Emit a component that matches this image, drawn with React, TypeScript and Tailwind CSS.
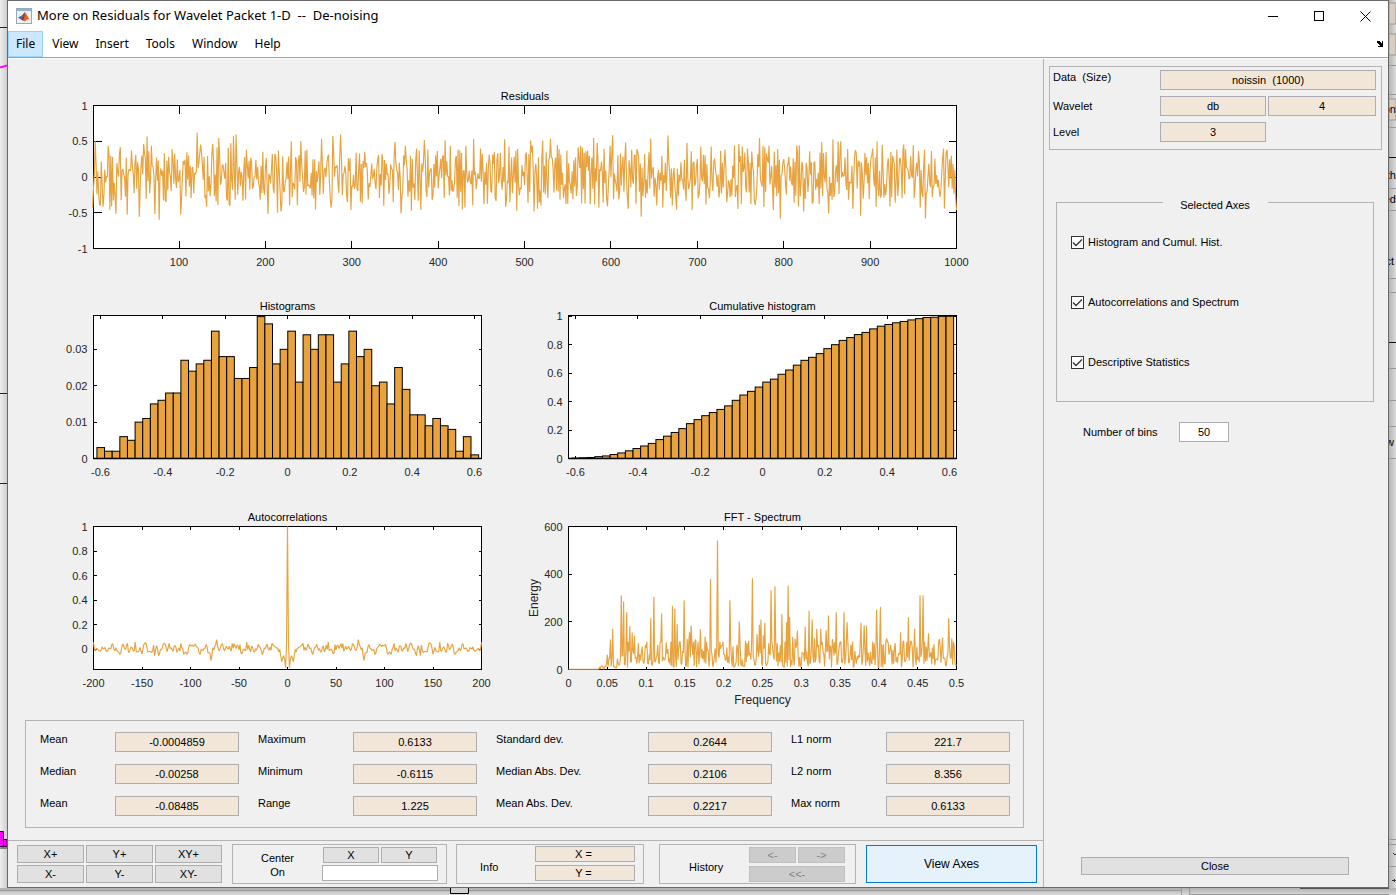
import type { ReactNode } from "react";

/* ---------- data ---------- */

function rng(seed: number) {
  let s = seed;
  return () => {
    s = (s * 1664525 + 1013904223) % 4294967296;
    return s / 4294967296;
  };
}

type Pair = [number, number];

// [sample offset in plot thirds, residual height in plot thirds below the top]
const RESIDUAL_KNOTS: Pair[] = [
  [9, 170], [47, 184], [84, 188], [116, 198], [152, 178], [162, 156], [176, 184], [238, 194], [312, 144], [324, 180],
  [359, 178], [378, 160], [414, 176], [422, 154], [429, 150], [461, 196], [511, 202], [557, 198], [596, 171], [624, 169],
  [641, 196], [687, 163], [720, 154], [744, 150], [815, 202], [905, 172], [938, 184], [972, 192], [995, 166], [1057, 167],
  [1071, 184], [1109, 170], [1119, 184], [1143, 163], [1162, 192], [1234, 164], [1247, 186],
  [1, 370], [20, 362], [32, 368], [53, 377], [71, 389], [103, 392], [139, 398], [186, 390], [199, 407], [219, 353],
  [263, 392], [341, 368], [411, 365], [526, 390], [555, 386], [564, 382], [590, 364], [668, 376], [715, 371], [775, 378],
  [807, 358], [923, 388], [955, 380], [985, 378], [1107, 376], [1115, 370], [1140, 364], [1174, 360], [1238, 368], [1271, 380],
  [1300, 204], [1313, 168], [1319, 184], [1349, 168], [1372, 162], [1393, 181], [1421, 198], [1456, 188], [1463, 184],
  [1484, 198], [1502, 160], [1511, 175], [1551, 184], [1559, 152], [1598, 174], [1616, 196], [1633, 202], [1672, 162],
  [1725, 153], [1782, 175], [1823, 186], [1855, 186], [1896, 196], [1924, 182], [1936, 178], [1948, 186], [1963, 192],
  [1998, 160], [2008, 184], [2026, 184], [2109, 184], [2117, 182], [2150, 200], [2184, 172], [2220, 164], [2234, 170],
  [2242, 170], [2286, 197], [2337, 192], [2351, 171], [2366, 181], [2392, 202], [2411, 196], [2431, 180], [2437, 194],
  [2460, 182], [2475, 200], [2493, 196], [2550, 192], [2561, 196],
  [1272, 380], [1305, 356], [1324, 382], [1334, 374], [1344, 364], [1439, 345], [1476, 358], [1490, 360], [1518, 371],
  [1544, 367], [1604, 374], [1644, 398], [1691, 364], [1710, 370], [1738, 364], [1749, 377], [1778, 350], [1798, 377],
  [1901, 354], [1933, 375], [1985, 362], [2040, 378], [2060, 403], [2102, 356], [2130, 382], [2157, 358], [2205, 388],
  [2278, 374], [2301, 395], [2349, 368], [2389, 367], [2480, 370], [2495, 403], [2553, 373], [2588, 378],
];

const residuals: Pair[] = (() => {
  const r = rng(77);
  const raw = Array.from({ length: 1001 }, () => (r() - 0.5) * 0.76);
  const out = raw.map((v, i) => {
    const a = raw[Math.max(0, i - 1)];
    const b = raw[Math.min(1000, i + 1)];
    return v * 0.95 - (a + b) * 0.12;
  });
  for (const [x, y] of RESIDUAL_KNOTS) {
    out[Math.min(1000, Math.round((x / 2589) * 1000))] = (278 - y) / 216;
  }
  return out.map((v, i) => [i, v] as Pair);
})();

const COUNTS = [
  3, 2, 2, 6, 5, 10, 11, 15, 16, 18, 18, 27, 24, 26, 27, 35, 28, 28, 22, 22, 25, 39, 37, 26, 30, 35, 21, 34, 30, 34, 34,
  21, 26, 35, 28, 30, 20, 21, 15, 25, 19, 12, 12, 9, 11, 9, 8, 2, 6, 1,
];
const frequencies = COUNTS.map((c) => c / 1000);
const cumulative = COUNTS.map((_, i) => COUNTS.slice(0, i + 1).reduce((a, b) => a + b, 0) / 1000);

const autocorr: Pair[] = (() => {
  const r = rng(2024);
  const raw = Array.from({ length: 203 }, () => r() - 0.5);
  const half = Array.from({ length: 201 }, (_, i) => (raw[i] + raw[i + 1] * 0.9) * 0.062 + 0.006);
  const fixed: Record<number, number> = {
    0: 1, 1: 0.05, 2: -0.15, 3: -0.08, 4: -0.05, 5: -0.07, 6: -0.1, 7: -0.05, 8: 0, 9: -0.02, 10: 0.01, 11: 0.01,
    12: 0.02, 13: 0.02, 14: 0.03, 15: 0.04, 16: 0.05, 42: 0.06, 49: 0.04, 57: 0.05, 73: 0.08, 74: 0.04, 78: -0.05,
    79: -0.09, 80: -0.03, 110: 0.05, 133: -0.05, 137: -0.05, 157: 0.06, 165: 0.05,
  };
  const at = (k: number) => fixed[k] ?? half[k];
  return Array.from({ length: 401 }, (_, i) => [i - 200, at(Math.abs(i - 200))] as Pair);
})();

// [offset in plot thirds, height in plot thirds below the top]
const SPECTRUM_KNOTS: Pair[] = [
  [117, 450], [126, 404], [133, 372], [159, 272], [166, 290], [176, 322], [184, 364], [192, 383], [199, 392], [211, 415],
  [232, 420], [247, 340], [256, 276], [268, 420], [280, 326], [294, 412], [313, 303], [320, 312], [327, 358], [348, 286],
  [356, 402], [364, 382], [369, 362], [383, 404], [397, 373], [411, 395], [427, 223], [447, 107], [456, 432], [485, 286],
  [494, 425], [506, 420], [514, 350], [532, 408], [540, 408], [553, 220], [567, 388], [573, 360], [579, 344], [586, 392],
  [591, 354], [601, 415], [609, 256], [621, 244], [628, 415], [642, 328], [655, 352], [660, 243], [665, 336], [673, 396],
  [680, 402], [689, 377], [711, 366], [723, 318], [733, 344], [740, 400], [747, 372], [758, 372], [775, 376], [781, 332],
  [792, 403], [799, 412], [805, 322], [814, 424], [829, 322], [837, 352], [849, 420], [880, 354], [889, 361], [895, 363],
  [918, 415], [926, 314], [938, 306], [946, 418], [955, 401], [999, 382], [1007, 408], [1022, 337], [1028, 408],
  [1039, 372], [1047, 425], [1057, 271], [1065, 271], [1074, 425], [1081, 385], [1099, 418], [1114, 403], [1125, 398],
  [1142, 340], [1151, 400], [1160, 420],
];

const spectrum: Pair[] = (() => {
  const r = rng(99);
  const out = Array.from({ length: 501 }, (_, i) => {
    const v = 8 + Math.min(108, -Math.log(1 - r() * 0.98) * 62);
    if (i < 39) return 1;
    if (i < 49) return v * 0.12;
    if (i < 66) return v * 0.4;
    return v;
  });
  for (const [x, y] of SPECTRUM_KNOTS) {
    out[Math.round((x / 1166) * 500)] = (494 - y) / 0.715;
  }
  return out.map((v, i) => [i / 1000, v] as Pair);
})();

/* ---------- charts ---------- */

interface AxesProps {
  title: string;
  size: Pair;
  left: number;
  top: number;
  width: number;
  xlim: Pair;
  ylim: Pair;
  xticks: number[];
  yticks: number[];
  tick?: number;
  xlabel?: string;
  ylabel?: string;
  children: (sx: (v: number) => number, sy: (v: number) => number) => ReactNode;
}

const PLOT_HEIGHT = 143;

function Axes({ title, size, left, top, width, xlim, ylim, xticks, yticks, tick = 3, xlabel, ylabel, children }: AxesProps) {
  const right = left + width;
  const bottom = top + PLOT_HEIGHT;
  const sx = (v: number) => left + ((v - xlim[0]) / (xlim[1] - xlim[0])) * width;
  const sy = (v: number) => bottom - ((v - ylim[0]) / (ylim[1] - ylim[0])) * PLOT_HEIGHT;
  return (
    <svg
      viewBox={`0 0 ${size[0]} ${size[1]}`}
      className="block h-auto w-full text-[11px]"
      fill="#262626"
      role="img"
      aria-label={title}
    >
      <rect x={left} y={top} width={width} height={PLOT_HEIGHT} fill="#fff" />
      <g stroke="#000" fill="none" shapeRendering="crispEdges">
        <rect x={left} y={top} width={width} height={PLOT_HEIGHT} />
        {xticks.map((v) => (
          <path key={v} d={`M${sx(v)} ${bottom}v${-tick}M${sx(v)} ${top}v${tick}`} />
        ))}
        {yticks.map((v) => (
          <path key={v} d={`M${left} ${sy(v)}h${tick}M${right} ${sy(v)}h${-tick}`} />
        ))}
      </g>
      {children(sx, sy)}
      <text x={left + width / 2} y={top - 6} textAnchor="middle" fill="#000">
        {title}
      </text>
      {xticks.map((v) => (
        <text key={v} x={sx(v)} y={bottom + 17} textAnchor="middle">
          {v}
        </text>
      ))}
      {yticks.map((v) => (
        <text key={v} x={left - 6} y={sy(v) + 4} textAnchor="end">
          {v}
        </text>
      ))}
      {xlabel && (
        <text x={left + width / 2} y={bottom + 34} textAnchor="middle" className="text-[12px]">
          {xlabel}
        </text>
      )}
      {ylabel && (
        <text
          transform={`translate(${left - 31} ${top + PLOT_HEIGHT / 2}) rotate(-90)`}
          textAnchor="middle"
          className="text-[12px]"
        >
          {ylabel}
        </text>
      )}
    </svg>
  );
}

type Scale = (v: number) => number;

function Line({ data, sx, sy }: { data: Pair[]; sx: Scale; sy: Scale }) {
  return (
    <polyline
      points={data.map(([x, y]) => `${sx(x).toFixed(2)},${sy(y).toFixed(2)}`).join(" ")}
      fill="none"
      stroke="#e8a23e"
      strokeWidth="1.15"
      strokeLinejoin="bevel"
    />
  );
}

function Bars({ data, sx, sy }: { data: number[]; sx: Scale; sy: Scale }) {
  const lo = -0.6115;
  const step = (0.6133 - lo) / data.length;
  return (
    <g fill="#e8a23e" stroke="#000">
      {data.map((v, i) => (
        <rect key={i} x={sx(lo + i * step)} width={sx(step) - sx(0)} y={sy(v)} height={sy(0) - sy(v)} />
      ))}
      <path d={`M${sx(-0.6225)} ${sy(0)}H${sx(0.6225)}`} strokeWidth="1.6" />
    </g>
  );
}

const HIST_TICKS = [-0.6, -0.4, -0.2, 0, 0.2, 0.4, 0.6];

/* ---------- controls ---------- */

function Field({ id, value, label, className = "" }: { id: string; value: string; label?: string; className?: string }) {
  return (
    <input
      id={id}
      readOnly
      defaultValue={value}
      aria-label={label}
      className={`w-full min-w-0 border border-[#abadb3] bg-[#f2e6d9] text-center outline-none ${className}`}
    />
  );
}

function PushButton({ children, className = "", disabled }: { children: ReactNode; className?: string; disabled?: boolean }) {
  return (
    <button
      type="button"
      disabled={disabled}
      className={`flex items-center justify-center border ${
        disabled ? "border-[#bfbfbf] bg-[#cccccc] text-[#838383]" : "border-[#adadad] bg-[#e1e1e1]"
      } ${className}`}
    >
      {children}
    </button>
  );
}

function CheckBox({ label }: { label: string }) {
  return (
    <label className="flex h-[13px] items-center gap-1">
      <span className="grid">
        <input
          type="checkbox"
          defaultChecked
          className="peer col-start-1 row-start-1 size-[13px] appearance-none border border-[#333] bg-white"
        />
        <svg
          viewBox="0 0 13 13"
          className="pointer-events-none col-start-1 row-start-1 hidden size-[13px] peer-checked:block"
          fill="none"
          stroke="#333"
          strokeWidth="1.3"
        >
          <path d="M2 6.500l3 3 6-6" />
        </svg>
      </span>
      {label}
    </label>
  );
}

const STATS = [
  ["Mean", "-0.0004859", "Maximum", "0.6133", "Standard dev.", "0.2644", "L1 norm", "221.7"],
  ["Median", "-0.00258", "Minimum", "-0.6115", "Median Abs. Dev.", "0.2106", "L2 norm", "8.356"],
  ["Mean", "-0.08485", "Range", "1.225", "Mean Abs. Dev.", "0.2217", "Max norm", "0.6133"],
];

function Statistics() {
  return (
    <section className="mt-[10px] mr-[19px] mb-3 ml-[17px] grid grid-cols-[75px_1fr_114px_1fr_171px_1fr_114px_1fr] gap-y-3 border border-[#b3b3b3] pt-[11px] pr-[13px] pb-[11px] pl-[14px]">
      {STATS.flatMap((row, r) =>
        [0, 2, 4, 6].flatMap((c) => {
          const id = `stat-${r}-${c}`;
          return [
            <label key={`${id}-label`} htmlFor={id} className={`leading-[14px] ${c ? "pl-[19px]" : ""}`}>
              {row[c]}
            </label>,
            <Field key={id} id={id} value={row[c + 1]} className="h-5" />,
          ];
        }),
      )}
    </section>
  );
}

function BottomBar() {
  return (
    <footer className="flex items-start border-t border-[#b3b3b3] pt-[3px] pr-[6px] pb-[3px] pl-[9px]">
      <div className="mt-px grid grid-cols-3 gap-[2px]">
        {["X+", "Y+", "XY+", "X-", "Y-", "XY-"].map((t) => (
          <PushButton key={t} className="h-[18px] w-[67px]">
            {t}
          </PushButton>
        ))}
      </div>
      <div className="ml-[10px] flex h-10 w-[215px] border border-[#b3b3b3] pt-[2px]">
        <label htmlFor="center-on" className="w-[89px] px-7 pt-1 text-center leading-[14px]">
          Center On
        </label>
        <div className="flex w-[116px] flex-col gap-[2px]">
          <div className="flex gap-[2px] px-px">
            <PushButton className="h-4 flex-1">X</PushButton>
            <PushButton className="h-4 flex-1">Y</PushButton>
          </div>
          <input id="center-on" className="h-4 w-full border border-[#abadb3] bg-white outline-none" />
        </div>
      </div>
      <div className="ml-[9px] flex h-10 w-[188px] border border-[#b3b3b3] pt-px">
        <span className="w-[78px] pt-[14px] pl-[23px] leading-[14px]">Info</span>
        <div className="flex w-[100px] flex-col gap-[3px]">
          <Field id="info-x" label="X value" value="X = " className="h-4" />
          <Field id="info-y" label="Y value" value="Y = " className="h-4" />
        </div>
      </div>
      <div className="ml-[15px] flex h-10 w-[197px] border border-[#b3b3b3] pt-[2px]">
        <span className="w-[89px] pt-[13px] pl-[29px] leading-[14px]">History</span>
        <div className="grid w-[96px] grid-cols-2 gap-[2px]">
          <PushButton disabled className="h-4">
            &lt;-
          </PushButton>
          <PushButton disabled className="h-4">
            -&gt;
          </PushButton>
          <PushButton disabled className="col-span-2 h-4">
            &lt;&lt;-
          </PushButton>
        </div>
      </div>
      <button
        type="button"
        className="mt-px ml-[10px] h-[38px] flex-1 border border-[#0078d7] bg-[#e5f1fb] text-[12px]"
      >
        View Axes
      </button>
    </footer>
  );
}

function SidePanel() {
  return (
    <aside className="flex w-[345px] shrink-0 flex-col border-l border-[#b3b3b3]">
      <section className="mt-[7px] mr-[6px] ml-[5px] grid grid-cols-[107px_106px_1fr] items-center gap-y-[6px] border border-[#b3b3b3] pt-[3px] pr-[5px] pb-[7px] pl-[3px]">
        <label htmlFor="data-name" className="self-start leading-[14px] whitespace-pre">
          {"Data  (Size)"}
        </label>
        <Field id="data-name" value="noissin  (1000)" className="col-span-2 h-5" />
        <label htmlFor="wavelet">Wavelet</label>
        <Field id="wavelet" value="db" className="h-5" />
        <div className="flex pl-[2px]">
          <Field id="wavelet-order" label="Wavelet order" value="4" className="h-5" />
        </div>
        <label htmlFor="level">Level</label>
        <Field id="level" value="3" className="h-5" />
      </section>

      <fieldset className="mt-[42px] mr-[14px] ml-3 border border-[#b3b3b3] px-[14px] pt-6 pb-8">
        <legend className="mx-auto w-[105px] pt-[6px] text-center leading-[14px]">Selected Axes</legend>
        <div className="flex flex-col gap-[47px]">
          <CheckBox label="Histogram and Cumul. Hist." />
          <CheckBox label="Autocorrelations and Spectrum" />
          <CheckBox label="Descriptive Statistics" />
        </div>
      </fieldset>

      <div className="mt-5 flex items-center pl-[39px]">
        <label htmlFor="bins" className="w-24">
          Number of bins
        </label>
        <input
          id="bins"
          defaultValue="50"
          className="h-5 w-[50px] border border-[#abadb3] bg-white text-center outline-none"
        />
      </div>

      <div className="mt-auto flex pr-[39px] pb-3 pl-[37px]">
        <PushButton className="h-[18px] flex-1">Close</PushButton>
      </div>
    </aside>
  );
}

/* ---------- window chrome ---------- */

function AppIcon() {
  return (
    <svg viewBox="0 0 16 16" className="size-4">
      <rect x=".5" y=".5" width="15" height="15" fill="#eef1f4" stroke="#9aa7b4" />
      <rect x="1" y="1" width="14" height="2" fill="#8fb4d6" />
      <path d="M2 9.500l3.500-1.800 1.700 1.700-2.200 2z" fill="#2c6fae" />
      <path d="M5.500 7.700c1.400-.6 2.100-3 3.500-3.700L7.200 9.600z" fill="#46527c" />
      <path d="M9 4c1.400 1.500 2.800 5.200 5 8-1.300-.8-2.200-1-3-.2-1 .8-1.600 1.500-2.500 1.600L5 11.400C6.800 10.200 8 7.200 9 4z" fill="#e0672a" />
      <path d="M9 4c-.1 2.900-.4 6-2.300 8.400L5 11.400C7 9.800 8 7 9 4z" fill="#9c2b1d" />
    </svg>
  );
}

function TitleBar() {
  const button = "flex h-full w-[46px] items-center justify-center";
  return (
    <header className="flex h-[30px] items-center bg-white pl-2">
      <AppIcon />
      <h1 className="ml-[5px] flex-1 text-[13px] whitespace-pre text-black">
        {"More on Residuals for Wavelet Packet 1-D  --  De-noising"}
      </h1>
      <button type="button" aria-label="Minimize" className={button}>
        <svg viewBox="0 0 11 11" className="size-[11px]" stroke="#000" shapeRendering="crispEdges">
          <path d="M0 5.500h10" />
        </svg>
      </button>
      <button type="button" aria-label="Maximize" className={button}>
        <svg viewBox="0 0 11 11" className="size-[11px]" stroke="#000" fill="none" shapeRendering="crispEdges">
          <rect x=".5" y=".5" width="9" height="9" />
        </svg>
      </button>
      <button type="button" aria-label="Close window" className={button}>
        <svg viewBox="0 0 11 11" className="size-[11px]" stroke="#000">
          <path d="M.5 .5l10 10M10.500 .5l-10 10" />
        </svg>
      </button>
    </header>
  );
}

function MenuBar() {
  return (
    <nav className="flex h-[26px] gap-px bg-white pr-[4px]">
      {["File", "View", "Insert", "Tools", "Window", "Help"].map((m, i) => (
        <button
          key={m}
          type="button"
          className={`border px-[7px] text-[12px] ${i === 0 ? "border-[#99d1ff] bg-[#cce8ff]" : "border-transparent"}`}
        >
          {m}
        </button>
      ))}
      <button type="button" aria-label="Dock figure" className="ml-auto">
        <svg viewBox="0 0 8 8" className="size-2" fill="#000">
          <path d="M1 1h3v1h1v1h1V1h1v6H2V6h2V5H3V4H2V3H1z" />
        </svg>
      </button>
    </nav>
  );
}

/* ---------- windows that show behind the figure ---------- */

function Backdrop() {
  return (
    <div aria-hidden="true" className="pointer-events-none absolute inset-0 overflow-hidden bg-[#d3d3d3]">
      <div className="absolute inset-y-0 left-0 w-[7px] bg-linear-to-r from-[#efefef] to-[#cfcfcf]">
        <svg viewBox="0 0 7 888" className="block w-[7px]">
          <path d="M0 27.500h7M0 393.500h7M0 483.500h7M0 848h7" stroke="#222" />
          <path d="M0 67.500l7-2" stroke="#f0f" strokeWidth="2" />
          <path d="M0 831.500h3.500v15H0M3.500 839.500H7v7H3.500" fill="#f0f" stroke="#303" />
        </svg>
      </div>
      <div className="absolute inset-y-0 right-0 w-[7px] bg-linear-to-r from-[#b4b4b4] to-[#dcdcdc]">
        <svg viewBox="0 0 7 888" className="block w-[7px]">
          <path d="M0 3h7v21H0zM0 34h7v21H0zM0 99h7v21H0z" fill="#d9cdc2" stroke="#999" />
          <path d="M0 65.500h7M0 94.500h7M0 127.500h7M0 188.500h7M0 210.500h7M0 278.500h7M0 292.500h7M0 368.500h7M0 400.500h7M0 426.500h7M0 458.500h7M0 839.500h7M0 844.500h7M0 866.500h7" stroke="#999" />
          <path d="M0 157.500h7M0 342.500h7" stroke="#111" />
          <path d="M4 853l2 2 2-2M3 880.500h3M5 879l1.500 1.500L5 882" stroke="#333" fill="none" />
        </svg>
        <span className="absolute top-[102px] right-0 leading-[14px]">on</span>
        <span className="absolute top-[168px] right-0 leading-[14px]">th</span>
        <span className="absolute top-[192px] right-0 leading-[14px]">ed</span>
        <span className="absolute top-[254px] right-[2px] leading-[14px]">ct</span>
        <span className="absolute top-[435px] right-[2px] leading-[14px]">w</span>
      </div>
      <div className="absolute inset-x-0 bottom-0 h-[7px] bg-linear-to-b from-[#b0b0b0] to-[#dadada]">
        <svg viewBox="0 0 1396 7" className="block h-[7px]" fill="none">
          <path d="M0 2.500h1181M1189 6.500h200" stroke="#999" />
          <path d="M450.500 0v5.500h18V0" fill="#d0d0d0" stroke="#000" />
          <path d="M1181.500 0v7M1189.500 0v7" stroke="#999" />
          <path d="M1300 .5h89" stroke="#555" />
        </svg>
      </div>
    </div>
  );
}

export default function App() {
  return (
    <div className="relative flex min-h-screen px-[7px] pb-[7px] font-['Liberation_Sans',Arial,sans-serif] text-[11px] text-black">
      <Backdrop />
      <div className="relative flex min-w-0 flex-1 flex-col border border-[#696969] bg-[#f0f0f0]">
        <div className="font-['Noto_Sans','Open_Sans',sans-serif]">
          <TitleBar />
          <MenuBar />
        </div>
        <div className="h-[2px] border-t border-[#a0a0a0] bg-white" />
        <div className="flex flex-1">
          <main className="flex min-w-0 flex-1 flex-col justify-between">
            <div>
              <Axes
                title="Residuals"
                size={[1035, 221]}
                left={85.5}
                top={46.5}
                width={863}
                xlim={[1, 1000]}
                ylim={[-1, 1]}
                xticks={[100, 200, 300, 400, 500, 600, 700, 800, 900, 1000]}
                yticks={[-1, -0.5, 0, 0.5, 1]}
                tick={8}
              >
                {(sx, sy) => <Line data={residuals} sx={sx} sy={sy} />}
              </Axes>
              <div className="grid grid-cols-[510fr_525fr]">
                <Axes
                  title="Histograms"
                  size={[510, 210]}
                  left={85.5}
                  top={35.5}
                  width={388}
                  xlim={[-0.6225, 0.6225]}
                  ylim={[0, 0.0393]}
                  xticks={HIST_TICKS}
                  yticks={[0, 0.01, 0.02, 0.03]}
                >
                  {(sx, sy) => <Bars data={frequencies} sx={sx} sy={sy} />}
                </Axes>
                <Axes
                  title="Cumulative histogram"
                  size={[525, 210]}
                  left={50.5}
                  top={35.5}
                  width={388}
                  xlim={[-0.6225, 0.6225]}
                  ylim={[0, 1.005]}
                  xticks={HIST_TICKS}
                  yticks={[0, 0.2, 0.4, 0.6, 0.8, 1]}
                >
                  {(sx, sy) => <Bars data={cumulative} sx={sx} sy={sy} />}
                </Axes>
                <Axes
                  title="Autocorrelations"
                  size={[510, 220]}
                  left={85.5}
                  top={36.5}
                  width={388}
                  xlim={[-200, 200]}
                  ylim={[-0.163, 1]}
                  xticks={[-200, -150, -100, -50, 0, 50, 100, 150, 200]}
                  yticks={[0, 0.2, 0.4, 0.6, 0.8, 1]}
                >
                  {(sx, sy) => <Line data={autocorr} sx={sx} sy={sy} />}
                </Axes>
                <Axes
                  title="FFT - Spectrum"
                  size={[525, 220]}
                  left={50.5}
                  top={36.5}
                  width={388}
                  xlim={[0, 0.5]}
                  ylim={[0, 600]}
                  xticks={[0, 0.05, 0.1, 0.15, 0.2, 0.25, 0.3, 0.35, 0.4, 0.45, 0.5]}
                  yticks={[0, 200, 400, 600]}
                  xlabel="Frequency"
                  ylabel="Energy"
                >
                  {(sx, sy) => <Line data={spectrum} sx={sx} sy={sy} />}
                </Axes>
              </div>
            </div>
            <div>
              <Statistics />
              <BottomBar />
            </div>
          </main>
          <SidePanel />
        </div>
      </div>
    </div>
  );
}
